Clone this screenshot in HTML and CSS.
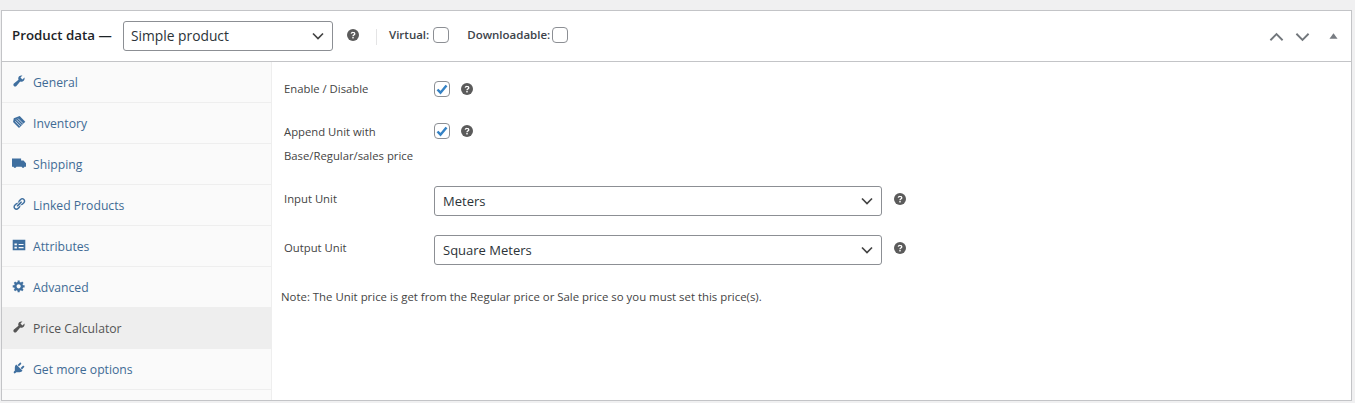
FILE: index.html
```html
<!DOCTYPE html>
<html lang="en">
<head>
<meta charset="utf-8">
<title>Product data</title>
<link rel="stylesheet" href="styles.css">
</head>
<body>
<section class="panel">
  <header class="head">
    <strong class="title">Product data —</strong>
    <select class="select select-type"><option>Simple product</option></select>
    <svg class="tip tip-head" viewBox="0 0 20 20"><use href="#help"/></svg>
    <span class="sep"></span>
    <label class="opt opt-virtual">Virtual:<input type="checkbox" class="check"></label>
    <label class="opt opt-down">Downloadable:<input type="checkbox" class="check"></label>
    <div class="handles">
      <svg class="chev" viewBox="0 0 16 10"><path d="M1.500 8.500 8 2l6.500 6.500"/></svg>
      <svg class="chev" viewBox="0 0 16 10"><path d="M1.500 1.500 8 8l6.500-6.500"/></svg>
      <svg class="tri" viewBox="0 0 10 6"><path d="M5 0l4.500 6h-9z"/></svg>
    </div>
  </header>
  <div class="body">
    <nav class="tabs">
      <a class="tab"><svg class="ico" viewBox="0 0 20 20"><use href="#wrench"/></svg>General</a>
      <a class="tab"><svg class="ico" viewBox="0 0 20 20"><path d="M11 1.500 19 9.500 10 18.500 1.500 10l1-5.500z"/><path class="cut" d="M6 6.500l7.500 7.500M8.500 5l7.500 7.500M4.500 9l7 7"/></svg>Inventory</a>
      <a class="tab"><svg class="ico" viewBox="0 0 20 20"><path d="M0 3.500h13v3h3.500L20 10.500v5h-2.100a2.200 2.200 0 0 1-4.200 0H6.300a2.200 2.200 0 0 1-4.200 0H0z"/></svg>Shipping</a>
      <a class="tab"><svg class="ico" viewBox="0 0 20 20"><path d="M17.740 2.760c1.680 1.690 1.680 4.410 0 6.100l-1.530 1.520c-1.120 1.120-2.700 1.470-4.140 1.090l2.620-2.610.76-.77.760-.76c.84-.84.84-2.200 0-3.040-.84-.85-2.200-.85-3.040 0l-.77.76-3.380 3.380c-.37-1.440-.02-3.020 1.100-4.140l1.520-1.530c1.690-1.680 4.420-1.680 6.100 0zM8.590 13.430l5.340-5.340c.42-.42.42-1.100 0-1.520-.44-.43-1.130-.39-1.530 0l-5.330 5.340c-.42.42-.42 1.100 0 1.520.44.43 1.130.39 1.520 0zm-.76 2.290l4.140-4.150c.38 1.440.03 3.020-1.090 4.140l-1.520 1.530c-1.690 1.680-4.410 1.680-6.100 0-1.680-1.680-1.680-4.420 0-6.100l1.530-1.520c1.120-1.120 2.700-1.470 4.140-1.100l-4.140 4.150c-.85.84-.85 2.200 0 3.050.84.84 2.200.84 3.040 0z"/></svg>Linked Products</a>
      <a class="tab"><svg class="ico" viewBox="0 0 20 20"><path fill-rule="evenodd" d="M1 2.500h18v15H1zM3.500 8v2.500H7V8zm6 .5V10h7V8.500zm-6 4V15H7v-2.500zm6 .5v1.500h7V13z"/></svg>Attributes</a>
      <a class="tab"><svg class="ico" viewBox="0 0 20 20"><path d="M18 12h-2.180c-.17.700-.44 1.350-.81 1.930l1.540 1.540-2.100 2.100-1.540-1.540c-.58.360-1.230.630-1.910.790V19H8v-2.180c-.68-.16-1.330-.43-1.910-.79l-1.540 1.540-2.120-2.120 1.540-1.540c-.36-.58-.63-1.230-.79-1.910H1V9.030h2.170c.16-.7.440-1.350.8-1.940L2.430 5.550l2.100-2.100 1.540 1.540c.58-.37 1.240-.64 1.930-.81V2h3v2.180c.68.16 1.330.43 1.910.79l1.540-1.540 2.120 2.120-1.540 1.540c.36.590.640 1.240.800 1.940H18V12zm-8.500 1.500c1.660 0 3-1.340 3-3s-1.340-3-3-3-3 1.340-3 3 1.340 3 3 3z"/></svg>Advanced</a>
      <a class="tab tab-active"><svg class="ico" viewBox="0 0 20 20"><use href="#wrench"/></svg>Price Calculator</a>
      <a class="tab"><svg class="ico" viewBox="0 0 20 20"><path d="M13.110 4.360L9.870 7.600 8 5.730l3.240-3.240c.35-.34 1.050-.2 1.560.32.520.51.660 1.210.310 1.550zm-8 1.770l.91-1.120 9.010 9.010-1.190.84c-.71.710-2.630 1.160-3.820 1.160H6.140L4.900 17.260c-.59.590-1.540.59-2.120 0-.59-.58-.59-1.530 0-2.120l1.240-1.240v-3.880c0-1.130.4-3.190 1.090-3.890zm7.260 3.970l3.240-3.240c.34-.35 1.040-.21 1.550.31.520.51.660 1.210.310 1.550l-3.240 3.250z"/></svg>Get more options</a>
    </nav>
    <div class="main">
      <div class="row row-enable">
        <span class="lab">Enable / Disable</span>
        <input type="checkbox" class="check" checked>
        <svg class="tip" viewBox="0 0 20 20"><use href="#help"/></svg>
      </div>
      <div class="row row-append">
        <span class="lab lab-tall">Append Unit with Base/Regular/sales price</span>
        <input type="checkbox" class="check" checked>
        <svg class="tip" viewBox="0 0 20 20"><use href="#help"/></svg>
      </div>
      <div class="row row-input">
        <span class="lab">Input Unit</span>
        <select class="select select-unit"><option>Meters</option></select>
        <svg class="tip" viewBox="0 0 20 20"><use href="#help"/></svg>
      </div>
      <div class="row row-output">
        <span class="lab">Output Unit</span>
        <select class="select select-unit"><option>Square Meters</option></select>
        <svg class="tip" viewBox="0 0 20 20"><use href="#help"/></svg>
      </div>
      <p class="note">Note: The Unit price is get from the Regular price or Sale price so you must set this price(s).</p>
    </div>
  </div>
</section>
<svg class="defs" aria-hidden="true">
  <symbol id="help" viewBox="0 0 20 20">
    <circle cx="10" cy="10" r="10" fill="#5b5b5b"/>
    <path d="M7 7.800a3 3 0 0 1 3-2.300c1.800 0 3 1 3 2.400 0 2.100-3 2.200-3 4" fill="none" stroke="#fff" stroke-width="2.200"/>
    <rect x="8.800" y="13.300" width="2.400" height="2.400" fill="#fff"/>
  </symbol>
  <symbol id="wrench" viewBox="0 0 20 20">
    <path d="M16.680 9.770c-1.340 1.340-3.300 1.670-4.950.99l-5.410 6.520c-.99.99-2.590.99-3.580 0s-.99-2.590 0-3.570l6.520-5.420c-.68-1.650-.35-3.610.99-4.950 1.280-1.280 3.120-1.620 4.720-1.060l-2.890 2.890 2.820 2.820 2.860-2.870c.53 1.580.18 3.390-1.080 4.670z"/>
  </symbol>
</svg>
</body>
</html>
```
FILE: styles.css
```css
* { box-sizing: border-box; }
html, body { height: 100%; }
body {
  margin: 0;
  padding: 10px 3px 2px 1px;
  background: #f0f0f1;
  font-family: "Open Sans", "Noto Sans", "Liberation Sans", sans-serif;
  font-size: 12px;
  color: #3c434a;
  overflow: hidden;
}
.defs { display: none; }
.panel {
  height: 391px;
  background: #fff;
  border: 1px solid #c3c4c7;
  display: flex;
  flex-direction: column;
}
.head {
  height: 51px;
  flex: none;
  display: flex;
  align-items: center;
  border-bottom: 1px solid #c3c4c7;
  padding: 0 0 0 10px;
}
.title { font-size: 13.300px; font-weight: 600; color: #1d2327; width: 111px; margin-top: -3px; flex: none; white-space: nowrap; }
.select {
  appearance: none;
  -webkit-appearance: none;
  border: 1px solid #8c8f94;
  border-radius: 3px;
  background: #fff url("data:image/svg+xml;utf8,<svg xmlns='http://www.w3.org/2000/svg' width='12' height='8' viewBox='0 0 12 8'><path d='M1 1.500l5 5 5-5' fill='none' stroke='%23444' stroke-width='1.700'/></svg>") no-repeat right 8px center;
  font-family: inherit;
  font-size: 13px;
  color: #2c3338;
  padding: 0 24px 0 8px;
  height: 30px;
  margin: 0;
}
.select-type { width: 210px; margin-top: -1px; padding-left: 7px; font-size: 13.800px; font-weight: 500; }
.select-unit { width: 448px; }
.tip { width: 12px; height: 12px; flex: none; display: block; }
.tip-head { margin: -3px 0 0 14px; }
.sep { width: 1px; height: 16px; background: #e4e4e5; margin: 0 0 -1px 17px; flex: none; }
.opt { display: flex; align-items: center; font-size: 11.500px; font-weight: 600; color: #3c434a; margin-top: -3px; white-space: pre; }
.opt-virtual { margin-left: 12px; gap: 4px; }
.opt-down { margin-left: 18px; gap: 2px; }
.check {
  appearance: none;
  -webkit-appearance: none;
  width: 16px;
  height: 16px;
  border: 1px solid #8c8f94;
  border-radius: 4px;
  background: #fff no-repeat center;
  margin: 0;
  flex: none;
  display: block;
}
.check:checked {
  background-image: url("data:image/svg+xml;utf8,<svg xmlns='http://www.w3.org/2000/svg' width='12' height='11' viewBox='0 0 12 11'><path d='M1.500 5.500l3 3.200L10.500 1.500' fill='none' stroke='%233582c4' stroke-width='2.500'/></svg>");
}
.handles { margin-left: auto; display: flex; align-items: center; padding-right: 13px; margin-top: 1px; }
.chev { width: 15px; height: 10px; fill: none; stroke: #72777c; stroke-width: 2; margin-right: 11px; display: block; }
.tri { width: 9px; height: 6px; fill: #787c82; margin-left: 8px; display: block; margin-top: -1px; }
.body { flex: 1; display: flex; min-height: 0; }
.tabs {
  width: 270px;
  flex: none;
  background: #fafafa;
  border-right: 1px solid #eee;
}
.tab {
  height: 41px;
  display: flex;
  align-items: center;
  gap: 7px;
  padding: 0 0 0 10px;
  font-size: 12.200px;
  border-bottom: 1px solid #eee;
  color: #3f6b95;
}
.tab-active { background: #eee; color: #555; border-bottom-color: #eee; }
.ico { width: 14px; height: 14px; fill: #3f6f9f; flex: none; margin-top: -3px; display: block; }
.tab-active .ico { fill: #555; }
.cut { fill: none; stroke: #d5deea; stroke-width: 1.300; }
.main { flex: 1; padding: 0 10px; }
.row { display: flex; align-items: flex-start; padding-left: 2px; }
.lab { width: 150px; flex: none; font-size: 11.300px; color: #444; line-height: 24px; }
.lab-tall { padding-right: 10px; }
.row-enable { padding-top: 15px; }
.row-enable .check { margin-top: 4px; }
.row-enable .tip { margin: 6px 0 0 11px; }
.row-append { padding-top: 19px; height: 84px; }
.row-append .check { margin-top: 3px; }
.row-append .tip { margin: 5px 0 0 11px; }
.row-input { height: 49px; margin-top: 1px; }
.row-input .lab, .row-output .lab { margin-top: 1px; }
.row-input .tip, .row-output .tip { margin: 7px 0 0 12px; }
.row-output { height: 49px; }
.note { margin: 4px 0 0 -1px; font-size: 11.400px; color: #444; line-height: 18px; }
```
